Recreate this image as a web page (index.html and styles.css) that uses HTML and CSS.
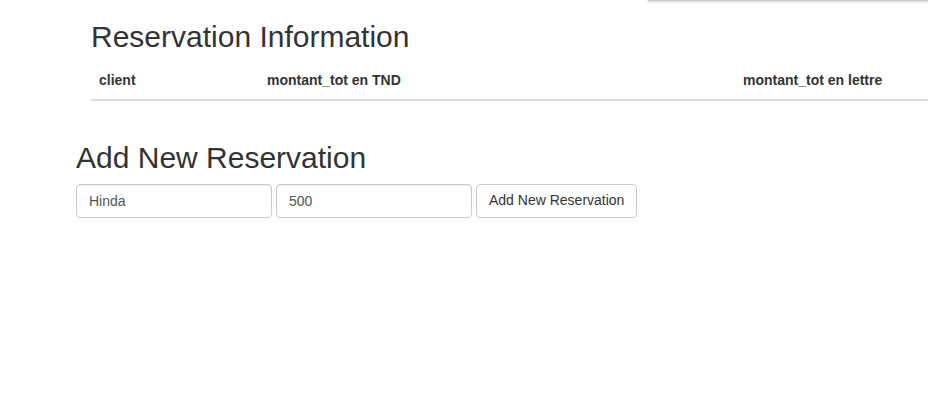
FILE: index.html
```html
<!DOCTYPE html>
<html>
<head>
<meta charset="utf-8">
<link rel="stylesheet" href="styles.css">
</head>
<body>
<div class="overlay-edge"></div>
<section class="info">
  <h2>Reservation Information</h2>
  <table class="table">
    <thead>
      <tr>
        <th class="c1">client</th>
        <th class="c2">montant_tot en TND</th>
        <th class="c3">montant_tot en lettre</th>
      </tr>
    </thead>
    <tbody></tbody>
  </table>
</section>
<section class="add">
  <h2>Add New Reservation</h2>
  <form class="form-row">
    <input class="form-control" type="text" value="Hinda">
    <input class="form-control" type="text" value="500">
    <button type="button" class="btn">Add New Reservation</button>
  </form>
</section>
</body>
</html>
```
FILE: styles.css
```css
* { box-sizing: border-box; }
html, body { margin: 0; padding: 0; }
body {
  font-family: "Liberation Sans", Arial, Helvetica, sans-serif;
  font-size: 14px;
  line-height: 1.42857;
  color: #333;
  background: #fff;
  overflow: hidden;
}
.overlay-edge {
  position: absolute;
  top: -20px;
  left: 648px;
  width: 290px;
  height: 21px;
  background: #fff;
  border-bottom: 1px solid #c8c8c8;
  box-shadow: 0 1px 3px rgba(0,0,0,0.18);
}
h2 {
  font-size: 30px;
  font-weight: 500;
  line-height: 1.1;
  margin: 20px 0 10px;
  color: #333;
}
.info { padding-left: 91px; }
.table {
  width: 837px;
  border-collapse: collapse;
  border-spacing: 0;
  margin-bottom: 20px;
}
.table th {
  text-align: left;
  font-weight: bold;
  padding: 8px;
  line-height: 1.42857;
  vertical-align: bottom;
  border-bottom: 2px solid #ddd;
}
.table .c1 { width: 168px; }
.table .c2 { width: 476px; }
.add {
  display: flow-root;
  padding-left: 76px;
}
.form-row {
  display: flex;
  gap: 4px;
}
.form-control {
  width: 196px;
  height: 34px;
  padding: 6px 12px;
  font-family: inherit;
  font-size: 14px;
  line-height: 1.42857;
  color: #555;
  background: #fff;
  border: 1px solid #ccc;
  border-radius: 4px;
  box-shadow: inset 0 1px 1px rgba(0,0,0,0.075);
  margin: 0;
}
.btn {
  width: 161px;
  height: 34px;
  padding: 6px 12px;
  font-family: inherit;
  font-size: 14px;
  line-height: 1.42857;
  color: #333;
  background: #fff;
  border: 1px solid #ccc;
  border-radius: 4px;
  margin: 0;
  white-space: nowrap;
}
```
